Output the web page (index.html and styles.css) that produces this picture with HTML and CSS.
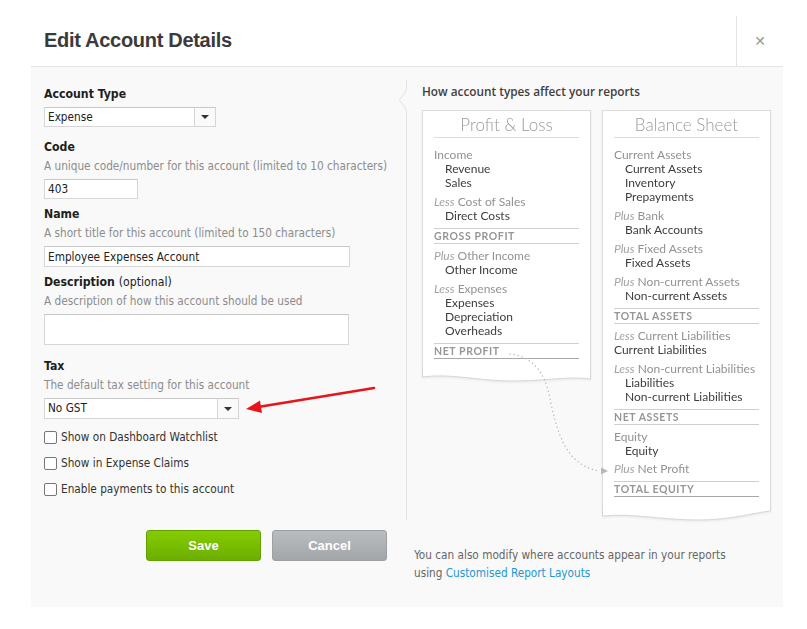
FILE: index.html
```html
<!DOCTYPE html>
<html>
<head>
<meta charset="utf-8">
<link rel="stylesheet" href="styles.css">
</head>
<body>
<div class="modal">
  <div class="modal-header">
    <h1 class="title">Edit Account Details</h1>
    <button class="close" type="button">&#x2715;</button>
  </div>
  <div class="modal-body">
    <form class="form">
      <div class="field field-type">
        <label class="lbl">Account Type</label>
        <div class="select select-type"><span class="val">Expense</span><span class="drop"><i class="tri"></i></span></div>
      </div>
      <div class="field">
        <label class="lbl">Code</label>
        <div class="help">A unique code/number for this account (limited to 10 characters)</div>
        <input class="input input-code" value="403">
      </div>
      <div class="field">
        <label class="lbl">Name</label>
        <div class="help">A short title for this account (limited to 150 characters)</div>
        <input class="input input-name" value="Employee Expenses Account">
      </div>
      <div class="field field-desc">
        <label class="lbl">Description <span class="opt">(optional)</span></label>
        <div class="help">A description of how this account should be used</div>
        <textarea class="input textarea"></textarea>
      </div>
      <div class="field field-tax">
        <label class="lbl">Tax</label>
        <div class="help">The default tax setting for this account</div>
        <div class="select select-tax"><span class="val">No GST</span><span class="drop"><i class="tri"></i></span></div>
      </div>
      <label class="check"><span class="box"></span>Show on Dashboard Watchlist</label>
      <label class="check"><span class="box"></span>Show in Expense Claims</label>
      <label class="check"><span class="box"></span>Enable payments to this account</label>
      <div class="actions">
        <button class="btn btn-save" type="button">Save</button>
        <button class="btn btn-cancel" type="button">Cancel</button>
      </div>
      <svg class="annot" width="145" height="40" viewBox="0 0 145 40">
        <line x1="22" y1="30" x2="138" y2="11" stroke="#e8141b" stroke-width="2.6" stroke-linecap="round"/>
        <polygon points="10,32 24,23.5 26,36" fill="#e8141b"/>
      </svg>
    </form>
    <div class="divider">
      <svg class="notch" width="12" height="30" viewBox="0 0 12 30">
        <rect x="8" y="0" width="4" height="30" fill="#f9f9f9"/>
        <path d="M9.5,0 L9.5,3 Q9.5,6 7,9 L3,14 Q2,15 3,16 L7,21 Q9.5,24 9.5,27 L9.5,30" fill="none" stroke="#e2e2e2" stroke-width="1"/>
      </svg>
    </div>
    <aside class="reports">
      <h2 class="rep-title">How account types affect your reports</h2>
      <div class="papers">
        <div class="paper">
          <div class="paper-body">
            <h3>Profit &amp; Loss</h3>
            <div class="grp"><div class="h">Income</div><div class="it">Revenue</div><div class="it">Sales</div></div>
            <div class="grp"><div class="h"><i>Less</i> Cost of Sales</div><div class="it">Direct Costs</div></div>
            <div class="total">GROSS PROFIT</div>
            <div class="grp"><div class="h"><i>Plus</i> Other Income</div><div class="it">Other Income</div></div>
            <div class="grp"><div class="h"><i>Less</i> Expenses</div><div class="it">Expenses</div><div class="it">Depreciation</div><div class="it">Overheads</div></div>
            <div class="total strong">NET PROFIT</div>
          </div>
          <svg class="wave" viewBox="0 0 169 14" preserveAspectRatio="none">
            <path d="M0.5,0 L0.5,7 C30,3 55,11 90,11 C125,11 145,6 168.5,9 L168.5,0 Z" fill="#fff"/>
            <path d="M0.5,0 L0.5,7 C30,3 55,11 90,11 C125,11 145,6 168.5,9 L168.5,0" fill="none" stroke="#d6d6d6" stroke-width="1"/>
          </svg>
        </div>
        <div class="paper">
          <div class="paper-body">
            <h3>Balance Sheet</h3>
            <div class="grp"><div class="h">Current Assets</div><div class="it">Current Assets</div><div class="it">Inventory</div><div class="it">Prepayments</div></div>
            <div class="grp"><div class="h"><i>Plus</i> Bank</div><div class="it">Bank Accounts</div></div>
            <div class="grp"><div class="h"><i>Plus</i> Fixed Assets</div><div class="it">Fixed Assets</div></div>
            <div class="grp"><div class="h"><i>Plus</i> Non-current Assets</div><div class="it">Non-current Assets</div></div>
            <div class="total">TOTAL ASSETS</div>
            <div class="grp"><div class="h"><i>Less</i> Current Liabilities</div><div class="it flat">Current Liabilities</div></div>
            <div class="grp"><div class="h"><i>Less</i> Non-current Liabilities</div><div class="it">Liabilities</div><div class="it">Non-current Liabilities</div></div>
            <div class="total">NET ASSETS</div>
            <div class="grp"><div class="h">Equity</div><div class="it">Equity</div><div class="h gap"><i>Plus</i> Net Profit</div></div>
            <div class="total strong">TOTAL EQUITY</div>
          </div>
          <svg class="wave" viewBox="0 0 169 14" preserveAspectRatio="none">
            <path d="M0.5,0 L0.5,8 C30,5 60,12 95,12 C130,12 150,5 168.5,3 L168.5,0 Z" fill="#fff"/>
            <path d="M0.5,0 L0.5,8 C30,5 60,12 95,12 C130,12 150,5 168.5,3 L168.5,0" fill="none" stroke="#d6d6d6" stroke-width="1"/>
          </svg>
        </div>
        <svg class="flow" width="200" height="380" viewBox="0 0 200 380">
          <path d="M88,244 C110,246 122,262 127,284 C134,318 142,356 178,361" fill="none" stroke="#b8b8b8" stroke-width="1.4" stroke-dasharray="0.1 4" stroke-linecap="round"/>
          <polygon points="179,357.5 186,361 179,364.5" fill="#b8b8b8"/>
        </svg>
      </div>
      <p class="note">You can also modify where accounts appear in your reports<br>using <a href="#">Customised Report Layouts</a></p>
    </aside>
  </div>
</div>
</body>
</html>
```
FILE: styles.css
```css
body {
  margin: 0;
  background: #fff;
  font-family: "DejaVu Sans Condensed", "DejaVu Sans", sans-serif;
  color: #222;
}

.modal {
  margin: 15px 0 0 31px;
  width: 752px;
}

.modal-header {
  display: flex;
  height: 51px;
  border-bottom: 1px solid #e3e3e3;
  background: #fff;
}

.title {
  flex: 1;
  margin: 0;
  padding-left: 13px;
  font: bold 20px/51px "Liberation Sans", Arial, sans-serif;
  color: #3a3a3a;
  letter-spacing: -0.3px;
}

.close {
  width: 47px;
  border: 0;
  border-left: 1px solid #e3e3e3;
  background: none;
  color: #999;
  font: bold 14px "DejaVu Sans", sans-serif;
  padding: 0;
  margin-top: 1px;
}

.modal-body {
  display: flex;
  height: 540px;
  background: #f9f9f9;
}

/* ---------- form ---------- */
.form {
  position: relative;
  width: 362px;
  padding: 18px 0 0 13px;
}

.field { margin-bottom: 6px; }
.field-type { margin-bottom: 11px; }
.field-desc { margin-bottom: 12px; }
.field-tax { margin-bottom: 5px; }

.lbl {
  display: block;
  font-weight: bold;
  font-size: 12.2px;
  line-height: 18px;
  color: #1e1e1e;
}
.lbl .opt { font-weight: normal; }

.help {
  margin-top: 1px;
  font-size: 11.7px;
  line-height: 18px;
  color: #8c8c8c;
}

.input {
  display: block;
  box-sizing: border-box;
  margin: 4px 0 0;
  height: 20px;
  padding: 0 3px;
  border: 1px solid #d6d6d6;
  border-top-color: #c8c8c8;
  background: #fff;
  font: 11.7px "DejaVu Sans Condensed", "DejaVu Sans", sans-serif;
  color: #222;
  outline: none;
}
.input-code { width: 94px; }
.input-name { width: 306px; height: 21px; }
.textarea { width: 305px; height: 31px; resize: none; }

.select {
  display: flex;
  box-sizing: border-box;
  height: 20px;
  border: 1px solid #d6d6d6;
  border-top-color: #c8c8c8;
  background: #fff;
  font-size: 11.7px;
  line-height: 18px;
}
.select-type { width: 172px; margin-top: 4px; }
.select-tax { width: 195px; height: 21px; margin-top: 4px; line-height: 19px; }
.select .val { flex: 1; padding-left: 3px; color: #222; }
.select .drop {
  width: 20px;
  border-left: 1px solid #d6d6d6;
  background: #fafafa;
  display: flex;
  align-items: center;
  justify-content: center;
}
.tri {
  width: 0;
  height: 0;
  border-left: 4px solid transparent;
  border-right: 4px solid transparent;
  border-top: 4px solid #333;
}

.check {
  display: flex;
  align-items: center;
  gap: 4px;
  height: 26px;
  font-size: 11.7px;
  color: #333;
}
.box {
  box-sizing: border-box;
  width: 13px;
  height: 13px;
  border: 1px solid #767676;
  border-radius: 2px;
  background: #fff;
}

.actions {
  display: flex;
  gap: 11px;
  padding-left: 102px;
  margin-top: 28px;
}
.btn {
  width: 115px;
  height: 31px;
  border-radius: 3px;
  font: bold 13px "Liberation Sans", Arial, sans-serif;
  color: #fff;
  padding: 0;
}
.btn-save {
  background: linear-gradient(#84cc02, #6cae00);
  border: 1px solid #62a100;
}
.btn-cancel {
  background: linear-gradient(#babdc0, #a3a6a9);
  border: 1px solid #9da0a3;
}

.annot {
  position: absolute;
  left: 205px;
  top: 310px;
}

/* ---------- divider ---------- */
.divider {
  position: relative;
  width: 1px;
  height: 440px;
  margin-top: 13px;
  background: #e2e2e2;
}
.notch {
  position: absolute;
  left: -9px;
  top: 5px;
}

/* ---------- reports ---------- */
.reports {
  flex: 1;
  display: flex;
  flex-direction: column;
  padding: 15px 0 25px 15px;
}
.rep-title {
  margin: 0 0 10px;
  font: 600 11.8px/18px "Open Sans", sans-serif;
  color: #3f3f3f;
}

.papers {
  position: relative;
  display: flex;
  align-items: flex-start;
  gap: 11px;
}
.paper {
  width: 169px;
  filter: drop-shadow(0 1px 1px rgba(0, 0, 0, 0.07));
}
.paper-body {
  background: #fff;
  border: 1px solid #dcdcdc;
  border-bottom: 0;
  padding: 2px 11px 12px;
  font: 12px/14px Lato, sans-serif;
}
.paper h3 {
  margin: 0 0 10px;
  font: 300 17px/24px Lato, sans-serif;
  color: #9a9a9a;
  text-align: center;
  border-bottom: 1px solid #dcdcdc;
}
.wave {
  display: block;
  width: 169px;
  height: 14px;
  margin-top: -1px;
}

.grp { margin-top: 5px; }
.grp:first-of-type { margin-top: 0; }
.grp .h { color: #929292; }
.grp .h i { color: #a4a4a4; }
.grp .h.gap { margin-top: 4px; }
.grp .it { color: #3d3d3d; padding-left: 11px; }
.grp .it.flat { padding-left: 0; }

.total {
  margin-top: 5px;
  border-top: 1px solid #cfcfcf;
  border-bottom: 1px solid #cfcfcf;
  font: bold 10.5px/14px Lato, sans-serif;
  letter-spacing: 0.6px;
  color: #969696;
}
.total.strong { border-bottom-color: #a8a8a8; }

.flow {
  position: absolute;
  left: 0;
  top: 0;
  pointer-events: none;
}

.note {
  margin: auto 0 0 -8px;
  font-size: 11.7px;
  line-height: 18px;
  color: #666;
}
.note a {
  color: #1e96d1;
  text-decoration: none;
}
```
